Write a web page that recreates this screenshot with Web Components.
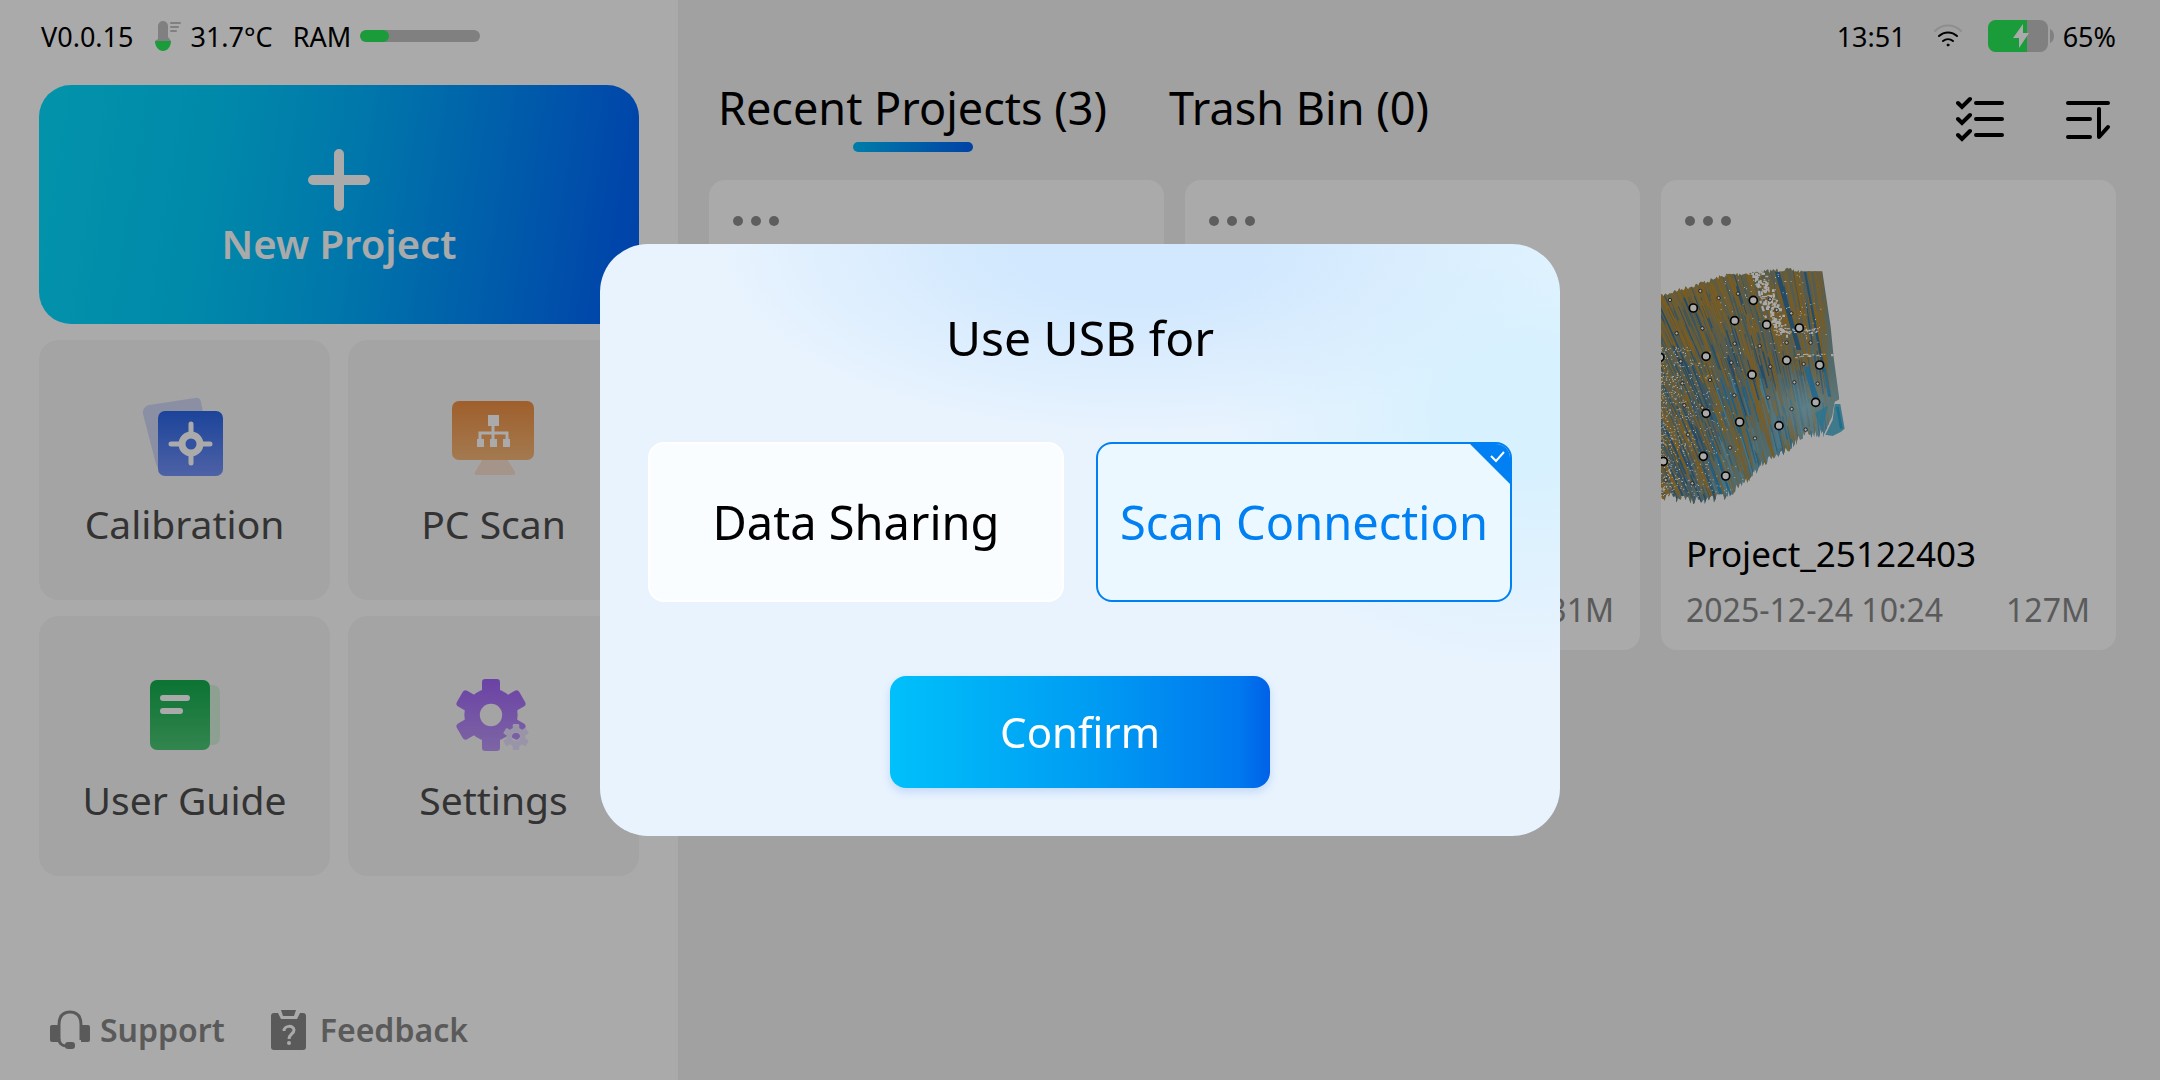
<!DOCTYPE html>
<html lang="en">
<head>
<meta charset="UTF-8">
<title>Scanner</title>
<style>
    body {
        margin: 0;
        font-family: "Noto Sans", "Open Sans", sans-serif;
        color: #000;
        background: #f2f2f2;
    }
</style>
</head>
<body>
<scanner-app>
    <side-panel slot="side">
        <device-status version="V0.0.15" temperature="31.7°C" ram="24"></device-status>
        <new-project>New Project</new-project>
        <menu-tile icon="calibration">Calibration</menu-tile>
        <menu-tile icon="pc">PC Scan</menu-tile>
        <menu-tile icon="guide">User Guide</menu-tile>
        <menu-tile icon="settings">Settings</menu-tile>
        <help-link slot="footer" icon="support">Support</help-link>
        <help-link slot="footer" icon="feedback">Feedback</help-link>
    </side-panel>
    <system-status slot="main" time="13:51" battery="65"></system-status>
    <project-tabs slot="main" recent="3" trash="0"></project-tabs>
    <project-grid slot="main">
        <project-card></project-card>
        <project-card size="31M"></project-card>
        <project-card name="Project_25122403" date="2025-12-24 10:24" size="127M" preview></project-card>
    </project-grid>
    <usb-dialog slot="dialog" heading="Use USB for">
        <usb-option value="sharing">Data Sharing</usb-option>
        <usb-option value="scan" checked>Scan Connection</usb-option>
    </usb-dialog>
</scanner-app>

<script>
const RESET = `
    * { box-sizing: border-box; }
    button { font: inherit; color: inherit; border: 0; background: none; padding: 0; margin: 0; cursor: pointer; }
    svg { display: block; flex: none; }
`;

class ScannerApp extends HTMLElement {
    constructor() {
        super();
        this.attachShadow({ mode: "open" });
        this.shadowRoot.innerHTML = `
        <style>
            ${RESET}
            :host { display: grid; grid-template-columns: 678fr 1482fr; min-height: 100vh; }
            aside { display: flex; background: #fff; min-width: 0; }
            main { min-width: 0; padding: 0 44px 44px 31px; }
        </style>
        <aside><slot name="side"></slot></aside>
        <main><slot name="main"></slot></main>
        <slot name="dialog"></slot>
        `;
    }
}
customElements.define("scanner-app", ScannerApp);


class SidePanel extends HTMLElement {
    constructor() {
        super();
        this.attachShadow({ mode: "open" });
        this.shadowRoot.innerHTML = `
        <style>
            ${RESET}
            :host { display: flex; flex-direction: column; flex: 1; padding: 0 39px 30px; }
            nav { display: grid; grid-template-columns: 1fr 1fr; gap: 16px 18px; }
            footer { display: flex; gap: 44px; margin-top: auto; padding-left: 10px; }
        </style>
        <nav><slot></slot></nav>
        <footer><slot name="footer"></slot></footer>
        `;
    }
}
customElements.define("side-panel", SidePanel);


class DeviceStatus extends HTMLElement {
    constructor() {
        super();
        this.attachShadow({ mode: "open" });
        this.shadowRoot.innerHTML = `
        <style>
            ${RESET}
            :host { display: flex; align-items: center; grid-column: 1 / -1; height: 72px; margin-bottom: -3px; font-size: 27px; white-space: nowrap; padding-left: 2px; }
            svg { margin: 0 9px 0 22px; }
            .ram { margin: 0 9px 0 20px; }
            .bar { width: 120px; height: 12px; border-radius: 6px; background: #c0c0c0; overflow: hidden; }
            .bar div { height: 100%; width: ${this.getAttribute("ram")}%; border-radius: 6px; background: #28eb57; }
        </style>
        <span>${this.getAttribute("version")}</span>
        <svg width="26" height="30" viewBox="0 0 26 30">
            <path d="M3 18V5a5 5 0 0 1 10 0v11l3 4H0z" fill="#c0c0c0"/>
            <path d="M0 20h16c0 6-4 10-8 10s-8-4-8-10z" fill="#28eb57"/>
            <path d="M16 2h9M16 6h7M16 10h5" stroke="#c0c0c0" stroke-width="2" stroke-linecap="round"/>
        </svg>
        <span>${this.getAttribute("temperature")}</span>
        <span class="ram">RAM</span>
        <div class="bar"><div></div></div>
        `;
    }
}
customElements.define("device-status", DeviceStatus);


class NewProject extends HTMLElement {
    constructor() {
        super();
        this.attachShadow({ mode: "open" });
        this.shadowRoot.innerHTML = `
        <style>
            ${RESET}
            :host { display: block; grid-column: 1 / -1; }
            button {
                display: flex; flex-direction: column; align-items: center; justify-content: center;
                width: 100%; height: 239px; padding-top: 10px; gap: 4px; border-radius: 32px;
                background: linear-gradient(99deg, #04dbff 4%, #00cfff 28%, #00b2ff 52%, #008aff 76%, #006aff 94%, #0064ff);
                color: #fff; font-size: 40px; line-height: 56px; font-weight: 600;
            }
        </style>
        <button type="button">
            <svg width="64" height="64" viewBox="0 0 64 64"><path d="M32 6v52M6 32h52" stroke="#fff" stroke-width="10" stroke-linecap="round"/></svg>
            <slot></slot>
        </button>
        `;
    }
}
customElements.define("new-project", NewProject);


// six teeth round a disc, with the hole left open
function gear(cx, cy, r, fill) {
    const tooth = r * 0.5;
    let teeth = "";
    for (let a = 0; a < 180; a += 60) {
        teeth += `<rect x="${cx - tooth / 2}" y="${cy - r}" width="${tooth}" height="${r * 2}" rx="${r * 0.09}" transform="rotate(${a} ${cx} ${cy})" fill="#fff"/>`;
    }
    const id = "gear" + r;
    return `
        <mask id="${id}">${teeth}
            <circle cx="${cx}" cy="${cy}" r="${r * 0.74}" fill="#fff"/>
            <circle cx="${cx}" cy="${cy}" r="${r * 0.31}" fill="#000"/>
        </mask>
        <rect x="${cx - r}" y="${cy - r}" width="${r * 2}" height="${r * 2}" fill="${fill}" mask="url(#${id})"/>`;
}

function fade(from, to) {
    return `<linearGradient id="fade" x1="0" y1="0" x2="0" y2="1"><stop offset="0" stop-color="${from}"/><stop offset="1" stop-color="${to}"/></linearGradient>`;
}

const TILE_ICONS = {
    calibration: `
        ${fade("#2a66e8", "#7593f9")}
        <path d="M8 16 54 9q5-1 6 4l12 62q1 5-4 6l-46 0q-5 0-7-6L2 25q-1-7 6-9z" fill="#d1d7f5"/>
        <rect x="17" y="22" width="65" height="65" rx="7" fill="url(#fade)"/>
        <path d="M50 35v39M30 55h39" stroke="#fff" stroke-width="5" stroke-linecap="round"/>
        <circle cx="50" cy="55" r="9" fill="#4b7af0" stroke="#fff" stroke-width="7"/>`,
    pc: `
        ${fade("#f08f42", "#f5b778")}
        <path d="M33 70h24l8 13q1 3-2 3H27q-3 0-2-3z" fill="#f7dece"/>
        <rect x="2" y="12" width="82" height="59" rx="7" fill="url(#fade)"/>
        <path d="M43 34v18M30 52V44h27v8" fill="none" stroke="#fff" stroke-width="3"/>
        <path d="M38 26h11v11H38zM27 50h7v8h-7zM40 50h7v8h-7zM53 50h7v8h-7z" fill="#fff"/>`,
    guide: `
        ${fade("#11ae4d", "#4dc877")}
        <rect x="50" y="20" width="29" height="60" rx="7" fill="#d6f0db"/>
        <rect x="9" y="15" width="60" height="70" rx="7" fill="url(#fade)"/>
        <path d="M22 33h24M22 46h17" stroke="#fff" stroke-width="6" stroke-linecap="round"/>`,
    settings: `
        ${fade("#a163f9", "#bc99f6")}
        ${gear(41, 50, 36, "url(#fade)")}
        ${gear(66, 72, 13, "#e6defb")}`
};

class MenuTile extends HTMLElement {
    constructor() {
        super();
        this.attachShadow({ mode: "open" });
        this.shadowRoot.innerHTML = `
        <style>
            ${RESET}
            :host { display: block; }
            button {
                display: flex; flex-direction: column; align-items: center; justify-content: center; gap: 20px;
                width: 100%; height: 260px; border-radius: 20px; background: #f6f6f6;
                color: #4d4d4d; font-size: 39px; line-height: 54px;
            }
        </style>
        <button type="button">
            <svg width="88" height="88" viewBox="0 0 88 88">${TILE_ICONS[this.getAttribute("icon")]}</svg>
            <slot></slot>
        </button>
        `;
    }
}
customElements.define("menu-tile", MenuTile);


const HELP_ICONS = {
    support: `
        <path d="M10 30V15C10 6 14 2 21 2s11 4 11 13v15" fill="none" stroke="#888" stroke-width="3"/>
        <path d="M10 29c0 5 4 7 8 7" fill="none" stroke="#888" stroke-width="3"/>
        <path d="M3 15h7v17H3q-2 0-2-2V17q0-2 2-2zM32 15h7q2 0 2 2v13q0 2-2 2h-7z" fill="#888"/>
        <rect x="16" y="32" width="10" height="7" rx="3" fill="#888"/>`,
    feedback: `
        <path d="M5 3h4l3 6h16l3-6h3q3 0 3 3v31q0 3-3 3H5q-3 0-3-3V6q0-3 3-3z" fill="#888"/>
        <path d="M12 0h15l-2 6H14z" fill="#888"/>
        <path d="M15 21c0-6 10-6 10-1 0 4-5 4-5 9" fill="none" stroke="#fff" stroke-width="3"/>
        <circle cx="20" cy="33" r="2" fill="#fff"/>`
};

class HelpLink extends HTMLElement {
    constructor() {
        super();
        this.attachShadow({ mode: "open" });
        this.shadowRoot.innerHTML = `
        <style>
            ${RESET}
            :host { display: block; }
            a { display: flex; align-items: center; gap: 9px; color: #888; text-decoration: none; font-size: 32px; line-height: 40px; font-weight: 600; }
        </style>
        <a href="#${this.getAttribute("icon")}">
            <svg width="42" height="40" viewBox="0 0 42 40">${HELP_ICONS[this.getAttribute("icon")]}</svg>
            <slot></slot>
        </a>
        `;
    }
}
customElements.define("help-link", HelpLink);


class SystemStatus extends HTMLElement {
    constructor() {
        super();
        this.attachShadow({ mode: "open" });
        const battery = this.getAttribute("battery");
        this.shadowRoot.innerHTML = `
        <style>
            ${RESET}
            :host { display: flex; align-items: center; justify-content: flex-end; height: 72px; font-size: 27px; }
            .wifi { margin: 0 26px 0 28px; }
            .battery { margin-right: 9px; }
        </style>
        <span>${this.getAttribute("time")}</span>
        <svg class="wifi" width="28" height="24" viewBox="0 0 28 24" fill="none" stroke-width="2" stroke-linecap="round">
            <path d="M1 7a18 18 0 0 1 26 0" stroke="#d6d6d6"/>
            <path d="M5 12a13 13 0 0 1 18 0M9 17a8 8 0 0 1 10 0" stroke="#000"/>
            <circle cx="14" cy="21" r="1" fill="#000" stroke="#000" stroke-width="1"/>
        </svg>
        <svg class="battery" width="66" height="32" viewBox="0 0 66 32">
            <clipPath id="body"><rect width="60" height="32" rx="8"/></clipPath>
            <g clip-path="url(#body)">
                <rect width="60" height="32" fill="#c0c0c0"/>
                <rect width="${battery * 0.6}" height="32" fill="#28eb57"/>
            </g>
            <path d="M62 9q4 2 4 7t-4 7z" fill="#c0c0c0"/>
            <path d="M35 4 25 18h6v10l10-15h-6z" fill="#fff"/>
        </svg>
        <span>${battery}%</span>
        `;
    }
}
customElements.define("system-status", SystemStatus);


class ProjectTabs extends HTMLElement {
    constructor() {
        super();
        this.attachShadow({ mode: "open" });
        this.shadowRoot.innerHTML = `
        <style>
            ${RESET}
            :host { display: flex; align-items: flex-start; padding: 4px 4px 0 9px; margin-bottom: 28px; }
            .tabs { display: flex; gap: 62px; flex: 1; }
            .tabs button { display: flex; flex-direction: column; align-items: center; font-size: 45px; line-height: 64px; white-space: nowrap; }
            .tabs button[aria-selected="true"]::after {
                content: ""; width: 120px; height: 10px; margin-top: 2px; border-radius: 5px;
                background: linear-gradient(100deg, #00bdfe, #0063f8);
            }
            .tools { display: flex; gap: 60px; padding-top: 19px; }
        </style>
        <div class="tabs" role="tablist">
            <button type="button" role="tab" aria-selected="true">Recent Projects (${this.getAttribute("recent")})</button>
            <button type="button" role="tab" aria-selected="false">Trash Bin (${this.getAttribute("trash")})</button>
        </div>
        <div class="tools">
            <button type="button" aria-label="Select">
                <svg width="48" height="48" viewBox="0 0 48 48" fill="none" stroke="#000" stroke-width="4" stroke-linecap="round">
                    <path d="M20 8h26M20 24h26M20 40h26"/>
                    <path d="m2 8 4 4 8-8M2 24l4 4 8-8M2 40l4 4 8-8" stroke-width="4"/>
                </svg>
            </button>
            <button type="button" aria-label="Sort">
                <svg width="48" height="48" viewBox="0 0 48 48" fill="none" stroke="#000" stroke-width="4" stroke-linecap="round" stroke-linejoin="round">
                    <path d="M4 8h40M4 24h22M4 42h22"/>
                    <path d="M35 14v28l9-10" stroke-width="4"/>
                </svg>
            </button>
        </div>
        `;
    }
}
customElements.define("project-tabs", ProjectTabs);


class ProjectGrid extends HTMLElement {
    constructor() {
        super();
        this.attachShadow({ mode: "open" });
        this.shadowRoot.innerHTML = `
        <style>
            :host { display: grid; grid-template-columns: repeat(3, 1fr); gap: 21px; }
        </style>
        <slot></slot>
        `;
    }
}
customElements.define("project-grid", ProjectGrid);


// scanned surface: a fan of coloured streaks with marker dots on it
function scanPreview() {
    let seed = 7;
    const rnd = () => (seed = (seed * 16807) % 2147483647) / 2147483647;

    const edge = (points, jitter) => {
        let d = "";
        for (let i = 1; i < points.length; i++) {
            const [x0, y0] = points[i - 1], [x1, y1] = points[i];
            const n = Math.ceil(Math.hypot(x1 - x0, y1 - y0) / 4);
            for (let k = 0; k < n; k++) {
                d += `L${(x0 + (x1 - x0) * k / n).toFixed(1)} ${(y0 + (y1 - y0) * k / n + (rnd() - 0.5) * jitter).toFixed(1)}`;
            }
        }
        return d;
    };
    const outline = "M55 140" +
        edge([[55, 140], [110, 122], [190, 98], [260, 75], [350, 68], [430, 58], [490, 66]], 14) +
        "L547 64L572 230L582 330L598 448L584 455L576 500L552 552" +
        edge([[552, 552], [500, 550], [430, 605], [370, 635], [325, 690], [250, 742], [175, 752], [110, 745], [55, 738]], 26) + "Z";

    let streaks = "";
    for (let i = 0; i < 1300; i++) {
        const x = rnd() * 760 - 200;
        const y = 30 + rnd() * 710;
        const lean = 0.5 - Math.max(0, x) / 560 * 0.38;
        const len = 40 + rnd() * 130;
        // gold along the top and the right, blue through the middle, cyan low on the right
        let share = 0.4;
        if (y < 130) share = 0.8;
        if (x > 280 && y < 300) share = 0.75;
        if (x > 380 && y < 300) share = 0.93;
        if (x < 110 && y > 380) share = 0.65;
        const gold = rnd() < share;
        const tone = rnd();
        let colour = gold ? (tone < 0.5 ? "#bd8a2a" : "#a98d4c") : (tone < 0.5 ? "#37719c" : "#5b8190");
        if (x > 200 && y > 360 && !gold) colour = tone < 0.5 ? "#2d90cc" : "#6fb0c8";
        streaks += `<path d="M${x.toFixed(0)} ${y.toFixed(0)}l${(len * lean).toFixed(0)} ${len.toFixed(0)}" stroke="${colour}" stroke-width="${(1.5 + rnd() * 4).toFixed(1)}"/>`;
    }

    let holes = "";
    const hole = (x, y, w, h) => holes += `M${x.toFixed(0)} ${y.toFixed(0)}h${w.toFixed(0)}v${h.toFixed(0)}h-${w.toFixed(0)}z`;
    for (let i = 0; i < 650; i++) {
        const x = 60 + rnd() * rnd() * 260;
        hole(x, 290 + rnd() * 450, 3, 3);
    }
    for (let i = 0; i < 130; i++) {
        const t = rnd();
        hole(350 + t * 76 + (rnd() - 0.5) * 40, 66 + t * 180 + (rnd() - 0.5) * 24, 3 + rnd() * 8, 3 + rnd() * 6);
    }
    for (let i = 0; i < 40; i++) hole(400 + rnd() * 130, 234 + rnd() * 16, 3 + rnd() * 8, 3);
    for (let i = 0; i < 26; i++) hole(436 + rnd() * 140, 310 + rnd() * 12, 3 + rnd() * 7, 3);
    for (let i = 0; i < 110; i++) hole(240 + rnd() * 320, 70 + rnd() * 240, 3, 3);

    const big = [[160, 174], [284, 212], [340, 151], [380, 224], [478, 234], [60, 322], [198, 319], [336, 374], [440, 331],
        [539, 345], [198, 490], [299, 516], [417, 527], [527, 457], [190, 619], [257, 678], [70, 634]];
    const small = [[181, 123], [236, 144], [294, 131], [90, 150], [110, 250], [187, 235], [284, 281], [359, 288], [410, 180],
        [454, 190], [390, 148], [440, 278], [512, 278], [122, 334], [274, 338], [391, 350], [491, 342], [127, 400], [210, 390],
        [463, 397], [533, 401], [283, 436], [384, 443], [133, 466], [187, 473], [455, 477], [144, 554], [345, 565],
        [270, 593], [497, 539], [77, 690], [157, 700]];
    const dots = big.map(([x, y]) => `<circle cx="${x}" cy="${y}" r="12" stroke-width="5"/>`).join("") +
        small.map(([x, y]) => `<circle cx="${x}" cy="${y}" r="5" stroke-width="2"/>`).join("");

    return `
        <clipPath id="outline"><path d="${outline}"/></clipPath>
        <linearGradient id="ground" x1="0" y1="0" x2="1" y2="1">
            <stop offset="0" stop-color="#9c8a4c"/><stop offset=".5" stop-color="#7d8b80"/><stop offset="1" stop-color="#7cc4d8"/>
        </linearGradient>
        <radialGradient id="haze"><stop offset="0" stop-color="#8fc8d8" stop-opacity=".8"/><stop offset="1" stop-color="#b0b0a0" stop-opacity="0"/></radialGradient>
        <g transform="translate(-21 24) scale(.3333)">
            <g clip-path="url(#outline)">
                <rect x="50" y="40" width="560" height="730" fill="url(#ground)"/>
                <g fill="none">${streaks}</g>
                <ellipse cx="500" cy="470" rx="150" ry="140" fill="url(#haze)"/>
                <path d="M525 490l40-24-20 76z" fill="#35aedb" opacity=".7"/>
                <path d="M405 66h14L484 300h-14zM492 66h6l58 300h-8z" fill="#37719c"/>
                <path d="M490 350l18 0 30 100h-18zM548 350h10l16 90h-10z" fill="#2d98d8" opacity=".8"/>
                <path d="${holes}" fill="#fff"/>
                <path d="M350 76l12 80 20 60 46 26" stroke="#fff" stroke-width="7" fill="none" stroke-dasharray="16 14 8 9"/>
            </g>
            <path d="M584 462h17l13 74-12 10-24 12-22-4 22-44z" fill="#5fb6d2"/>
            <path d="M592 470l12 66" stroke="#2fa5d0" stroke-width="8"/>
            <g fill="#fff" stroke="#000">${dots}</g>
        </g>`;
}

class ProjectCard extends HTMLElement {
    constructor() {
        super();
        this.attachShadow({ mode: "open" });
        this.shadowRoot.innerHTML = `
        <style>
            ${RESET}
            :host { display: block; min-width: 0; border-radius: 16px; background: #fff; overflow: hidden; }
            button { display: block; margin: 36px 0 0 24px; }
            .preview { width: 100%; height: 304px; }
            .text { padding: 0 26px 18px 25px; }
            h3 { margin: 0 0 10px; min-height: 48px; font-size: 35px; line-height: 48px; font-weight: 400; }
            .meta { display: flex; justify-content: space-between; min-height: 44px; color: #888; font-size: 32px; line-height: 44px; }
        </style>
        <button type="button" aria-label="More">
            <svg width="46" height="10" viewBox="0 0 46 10" fill="#8e8e8e"><circle cx="5" cy="5" r="5"/><circle cx="23" cy="5" r="5"/><circle cx="41" cy="5" r="5"/></svg>
        </button>
        <svg class="preview">${this.hasAttribute("preview") ? scanPreview() : ""}</svg>
        <div class="text">
            <h3>${this.getAttribute("name") || ""}</h3>
            <div class="meta"><span>${this.getAttribute("date") || ""}</span><span>${this.getAttribute("size") || ""}</span></div>
        </div>
        `;
    }
}
customElements.define("project-card", ProjectCard);


class UsbOption extends HTMLElement {
    constructor() {
        super();
        this.attachShadow({ mode: "open" });
        this.shadowRoot.innerHTML = `
        <style>
            ${RESET}
            :host { display: block; }
            label {
                position: relative; display: flex; align-items: center; justify-content: center; height: 160px;
                border: 2px solid #fff; border-radius: 16px; background: #f9fdff; overflow: hidden;
                font-size: 47px; line-height: 64px; white-space: nowrap; cursor: pointer;
            }
            input { position: absolute; inset: 0; margin: 0; appearance: none; outline: 0; }
            svg { display: none; position: absolute; top: -2px; right: -2px; }
            :host([checked]) label { border-color: #0080f2; background: #ecf8ff; color: #0080f2; }
            :host([checked]) svg { display: block; }
        </style>
        <label>
            <input type="radio" name="usb" value="${this.getAttribute("value")}" ${this.hasAttribute("checked") ? "checked" : ""}>
            <slot></slot>
            <svg width="44" height="44" viewBox="0 0 44 44"><path d="M0 0h44v44z" fill="#0080f2"/><path d="m23 14 5 5 8-9" fill="none" stroke="#fff" stroke-width="2"/></svg>
        </label>
        `;
        this.shadowRoot.querySelector("input").addEventListener("change", () => {
            for (const option of this.parentElement.children) {
                option.toggleAttribute("checked", option === this);
                option.shadowRoot.querySelector("input").checked = option === this;
            }
        });
    }
}
customElements.define("usb-option", UsbOption);


class UsbDialog extends HTMLElement {
    constructor() {
        super();
        this.attachShadow({ mode: "open" });
        this.shadowRoot.innerHTML = `
        <style>
            ${RESET}
            :host { position: fixed; inset: 0; display: flex; align-items: center; justify-content: center; background: rgba(0, 0, 0, 0.333); }
            :host([hidden]) { display: none; }
            section {
                display: flex; flex-direction: column; align-items: center; gap: 72px;
                width: 960px; max-width: 100%; padding: 62px 48px 48px; border-radius: 48px;
                background:
                    radial-gradient(ellipse 420px 190px at 56% 0, #d1e8fe 30%, rgba(209, 232, 254, 0)),
                    radial-gradient(ellipse 300px 260px at 96% 28%, #d7f1fe 20%, rgba(215, 241, 254, 0)),
                    #e8f3fe;
            }
            h2 { margin: 0; font-size: 48px; line-height: 64px; font-weight: 400; }
            .options { display: grid; grid-template-columns: 1fr 1fr; gap: 32px; width: 100%; }
            button {
                width: 380px; height: 112px; margin-top: 2px; border-radius: 16px; color: #fff; font-size: 42px; line-height: 60px;
                background: linear-gradient(90deg, #00c0fa, #009df3 52%, #0078ee 92%, #0061e8);
                box-shadow: 0 4px 8px rgba(50, 110, 220, 0.2);
            }
        </style>
        <section role="dialog" aria-modal="true" aria-labelledby="heading">
            <h2 id="heading">${this.getAttribute("heading")}</h2>
            <div class="options" role="radiogroup" aria-labelledby="heading"><slot></slot></div>
            <button type="button">Confirm</button>
        </section>
        `;
        this.shadowRoot.querySelector("button").addEventListener("click", () => {
            this.hidden = true;
        });
    }
}
customElements.define("usb-dialog", UsbDialog);
</script>
</body>
</html>
